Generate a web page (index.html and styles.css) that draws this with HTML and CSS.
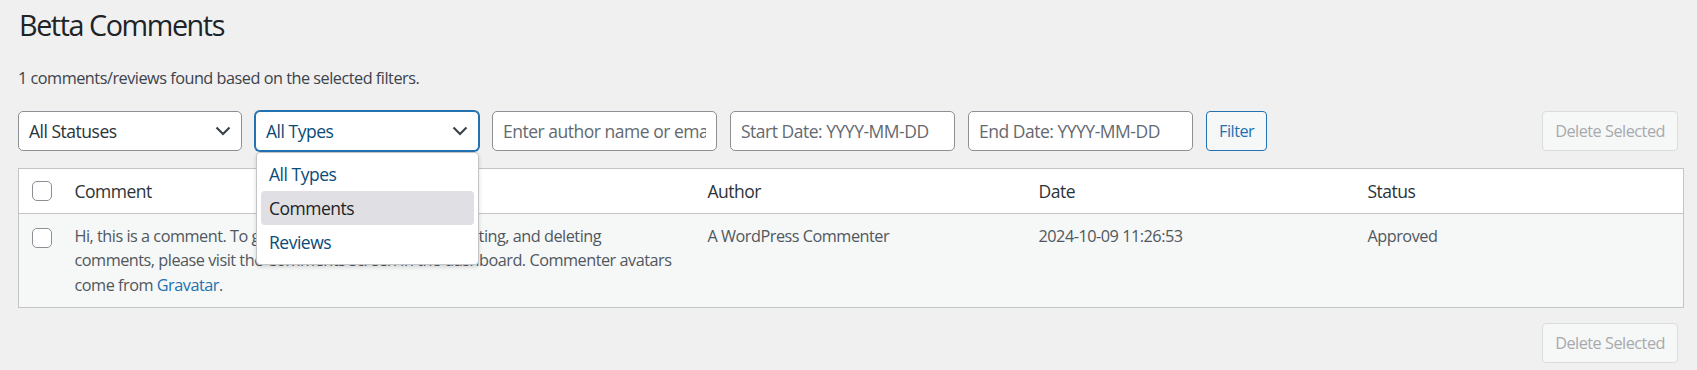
FILE: index.html
```html
<!DOCTYPE html>
<html lang="en">
<head>
    <meta charset="UTF-8">
    <meta name="viewport" content="width=device-width, initial-scale=1.0">
    <title>Betta Comments</title>
    <link rel="stylesheet" href="styles.css">
</head>
<body>
    <div class="wrap">
        <h1>Betta Comments</h1>
        <p class="summary">1 comments/reviews found based on the selected filters.</p>

        <div class="tablenav">
            <div class="filters">
                <div class="select">
                    <span>All Statuses</span>
                    <svg class="chevron" width="16" height="10" viewBox="0 0 16 10"><polyline points="1.5,1.5 8,8 14.5,1.5"/></svg>
                </div>
                <div class="select-holder">
                    <div class="select is-open">
                        <span>All Types</span>
                        <svg class="chevron" width="16" height="10" viewBox="0 0 16 10"><polyline points="1.5,1.5 8,8 14.5,1.5"/></svg>
                    </div>
                    <ul class="dropdown">
                        <li>All Types</li>
                        <li class="hover">Comments</li>
                        <li>Reviews</li>
                    </ul>
                </div>
                <input type="text" class="field" placeholder="Enter author name or email">
                <input type="text" class="field" placeholder="Start Date: YYYY-MM-DD">
                <input type="text" class="field" placeholder="End Date: YYYY-MM-DD">
                <button class="button">Filter</button>
            </div>
            <button class="button" disabled>Delete Selected</button>
        </div>

        <table class="comments-table">
            <colgroup>
                <col class="col-cb">
                <col class="col-comment">
                <col class="col-author">
                <col class="col-date">
                <col class="col-status">
            </colgroup>
            <thead>
                <tr>
                    <th class="check-column"><span class="checkbox"></span></th>
                    <th>Comment</th>
                    <th>Author</th>
                    <th>Date</th>
                    <th>Status</th>
                </tr>
            </thead>
            <tbody>
                <tr>
                    <td class="check-column"><span class="checkbox"></span></td>
                    <td>Hi, this is a comment. To get started with moderating, editing, and deleting comments, please visit the Comments screen in the dashboard. Commenter avatars come from <a href="#">Gravatar</a>.</td>
                    <td>A WordPress Commenter</td>
                    <td>2024-10-09 11:26:53</td>
                    <td>Approved</td>
                </tr>
            </tbody>
        </table>

        <div class="tablenav tablenav-bottom">
            <button class="button" disabled>Delete Selected</button>
        </div>
    </div>
</body>
</html>
```

FILE: styles.css
```css
* {
    box-sizing: border-box;
    margin: 0;
    padding: 0;
}

body {
    background: #f0f0f1;
    color: #3c434a;
    font-family: 'Open Sans', 'Noto Sans', sans-serif;
    font-size: 16.25px;
    line-height: 1.5;
    letter-spacing: -0.03em;
}

.wrap {
    margin: 0 13px 0 18px;
}

h1 {
    color: #1d2327;
    font-size: 28.75px;
    font-weight: 400;
    line-height: 1.3;
    letter-spacing: -0.05em;
    padding: 6px 0 0 1px;
}

.summary {
    margin-top: 23px;
}

.tablenav {
    display: flex;
    justify-content: space-between;
    align-items: center;
    margin: 20px 0 17px;
}

.filters {
    display: flex;
    align-items: center;
    gap: 13px;
}

.select,
.field {
    width: 225px;
    height: 40px;
    background: #fff;
    border: 1px solid #8c8f94;
    border-radius: 5px;
    font-family: inherit;
    font-size: 17.5px;
    letter-spacing: inherit;
    color: #2c3338;
}

.select {
    display: flex;
    align-items: center;
    justify-content: space-between;
    padding: 0 10px;
}

.select:first-child {
    width: 224px;
}

.select-holder {
    position: relative;
}

.select.is-open {
    border-color: #2271b1;
    box-shadow: 0 0 0 1px #2271b1;
    color: #0a4b78;
}

.chevron {
    fill: none;
    stroke: #3c434a;
    stroke-width: 2.2;
}

.dropdown {
    position: absolute;
    top: 41px;
    left: 1px;
    width: 223px;
    list-style: none;
    background: #fff;
    border: 1px solid #c3c4c7;
    border-radius: 4px;
    box-shadow: 0 2px 4px rgba(0, 0, 0, 0.15);
    padding: 4px 4px 5px;
    color: #0a4b78;
    font-size: 17.5px;
    z-index: 2;
}

.dropdown li {
    height: 34px;
    line-height: 34px;
    padding: 0 8px;
    border-radius: 4px;
}

.dropdown li.hover {
    background: #e0e0e4;
    color: #1d2327;
}

.field {
    padding: 0 10px;
    outline: none;
}

.field::placeholder {
    color: #646970;
}

.button {
    height: 40px;
    padding: 0 12px;
    border: 1px solid #2271b1;
    border-radius: 4px;
    background: #f6f7f7;
    color: #2271b1;
    font-family: inherit;
    font-size: 16.25px;
    letter-spacing: inherit;
    cursor: pointer;
}

.button:disabled {
    border-color: #dcdcde;
    color: #a7aaad;
    cursor: default;
    margin-right: 6px;
}

.comments-table {
    width: 100%;
    table-layout: fixed;
    border-collapse: collapse;
    background: #fff;
    border: 1px solid #c3c4c7;
}

.col-cb { width: 44px; }
.col-comment { width: 633px; }
.col-author { width: 331px; }
.col-date { width: 329px; }

.comments-table th {
    text-align: left;
    font-weight: 400;
    font-size: 17.5px;
    color: #2c3338;
    line-height: 24px;
    padding: 10px 12px;
    border-bottom: 1px solid #c3c4c7;
}

.comments-table td {
    vertical-align: top;
    color: #50575e;
    line-height: 24.4px;
    padding: 10px 12px;
    background: #f6f7f7;
}

.comments-table a {
    color: #2271b1;
    text-decoration: none;
}

.check-column {
    padding: 0 0 0 13px !important;
    vertical-align: middle;
}

td.check-column {
    vertical-align: top;
    padding-top: 14px !important;
}

.checkbox {
    display: block;
    width: 20px;
    height: 20px;
    background: #fff;
    border: 1px solid #8c8f94;
    border-radius: 5px;
}

.tablenav-bottom {
    justify-content: flex-end;
    margin-top: 15px;
}
```
